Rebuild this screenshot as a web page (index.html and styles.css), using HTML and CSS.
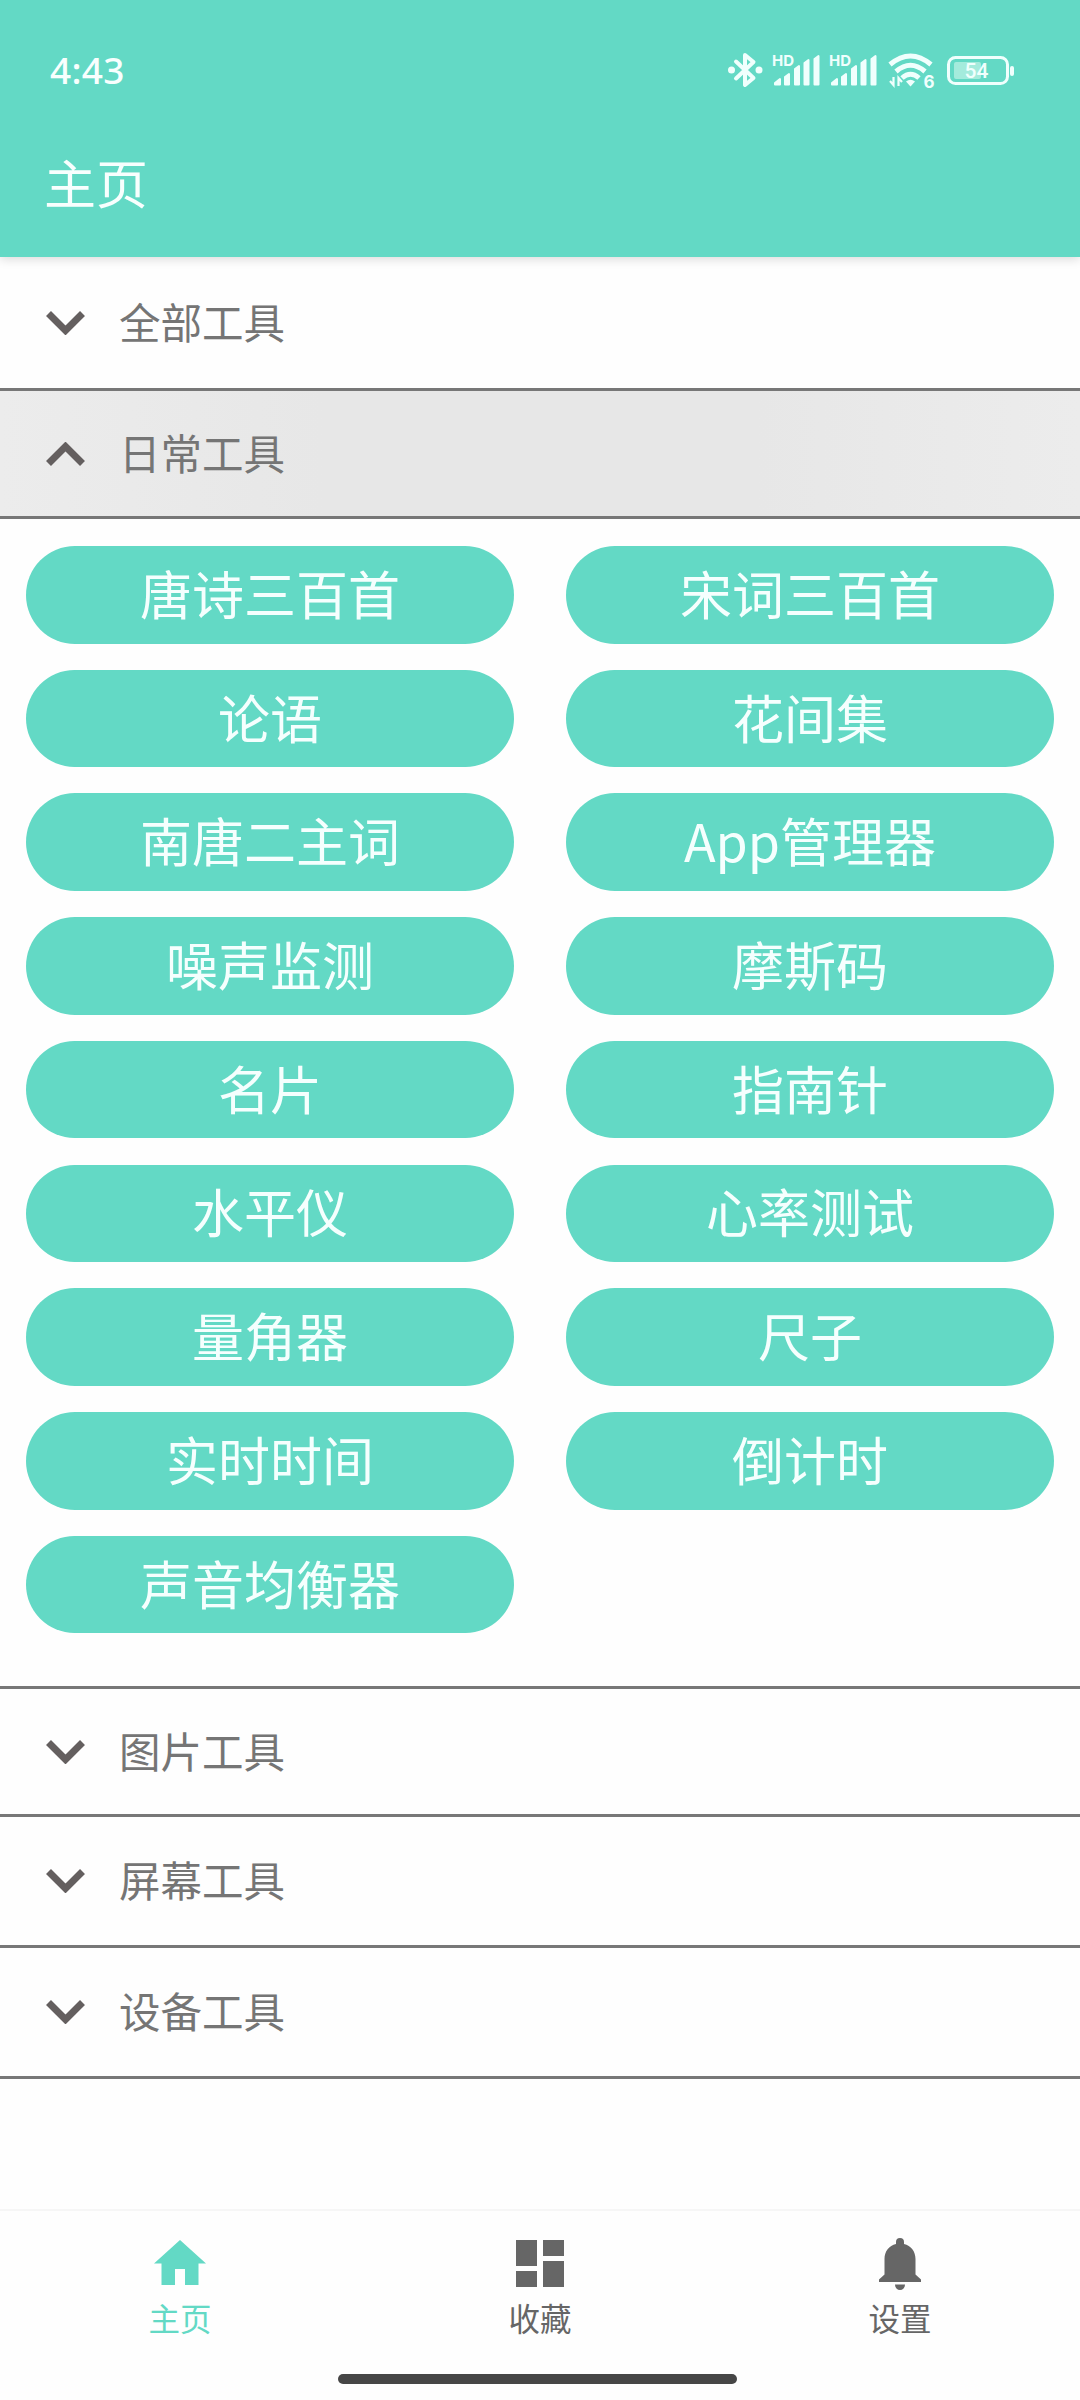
FILE: index.html
```html
<!DOCTYPE html>
<html lang="zh-CN">
<head>
    <meta charset="UTF-8">
    <meta name="viewport" content="width=device-width, initial-scale=1.0">
    <title>主页</title>
    <link rel="stylesheet" href="styles.css">
</head>
<body>
    <header class="app-header">
        <div class="status-bar">
            <span class="clock">4:43</span>
            <svg class="status-icons" width="290" height="44" viewBox="0 -2 290 44" fill="none" stroke="#f0fffd">
                <!-- Bluetooth -->
                <path d="M8 11.500L25.500 28L17 35V5L25.500 12L8 28.500" stroke-width="4" stroke-linejoin="round" stroke-linecap="round"/>
                <circle cx="3.500" cy="20" r="3.500" fill="#f0fffd" stroke="none"/>
                <circle cx="31" cy="20" r="3.500" fill="#f0fffd" stroke="none"/>
                <!-- Signal 1 -->
                <g id="signal" fill="#f0fffd" stroke="none">
                    <text class="hd" x="44" y="16" textLength="22">HD</text>
                    <path d="M47 34.500V33L52 29V34.500ZM57 27L61 24V34.500H57ZM67 19L71 16V34.500H67ZM76.500 13L80.500 10V34.500H76.500ZM86.500 9L90.500 6V34.500H86.500Z" stroke="#f0fffd" stroke-width="2" stroke-linejoin="round"/>
                </g>
                <!-- Signal 2 -->
                <use href="#signal" x="57"/>
                <!-- Wi-Fi -->
                <path d="M162 14.500Q182.500 -2.500 203 14.500M168 21.500Q182.500 9 197 21.500M174 28Q182.500 20.500 191 28" stroke-width="5"/>
                <path d="M178 31.500Q182.500 28 187 31.500L182.500 36.500Z" fill="#f0fffd" stroke="none"/>
                <path d="M165.500 27V35L162 31M170.500 36V28L174 32" stroke-width="2.200"/>
                <text class="wifi-gen" x="195.500" y="38" fill="#f0fffd" stroke="none">6</text>
                <!-- Battery -->
                <rect x="220.500" y="7.500" width="59" height="26" rx="7" stroke-width="3"/>
                <rect x="226" y="12" width="27" height="17" rx="2" fill="#a4ebdc" stroke="none"/>
                <path d="M284 18V24" stroke-width="4" stroke-linecap="round"/>
                <text class="level" x="248.500" y="27.500" text-anchor="middle" fill="#f0fffd" stroke="none">54</text>
            </svg>
        </div>
        <h1>主页</h1>
    </header>

    <main>
        <div class="group first">
            <svg class="arrow" viewBox="0 0 39 24"><path d="M2.500 2.500L19.500 19.500L36.500 2.500"/></svg>
            <span>全部工具</span>
        </div>
        <div class="group open">
            <svg class="arrow" viewBox="0 0 39 24"><path d="M2.500 21.500L19.500 4.500L36.500 21.500"/></svg>
            <span>日常工具</span>
        </div>
        <div class="tools">
            <button>唐诗三百首</button>
            <button>宋词三百首</button>
            <button>论语</button>
            <button>花间集</button>
            <button>南唐二主词</button>
            <button>App管理器</button>
            <button>噪声监测</button>
            <button>摩斯码</button>
            <button>名片</button>
            <button>指南针</button>
            <button>水平仪</button>
            <button>心率测试</button>
            <button>量角器</button>
            <button>尺子</button>
            <button>实时时间</button>
            <button>倒计时</button>
            <button>声音均衡器</button>
        </div>
        <div class="group short">
            <svg class="arrow" viewBox="0 0 39 24"><path d="M2.500 2.500L19.500 19.500L36.500 2.500"/></svg>
            <span>图片工具</span>
        </div>
        <div class="group">
            <svg class="arrow" viewBox="0 0 39 24"><path d="M2.500 2.500L19.500 19.500L36.500 2.500"/></svg>
            <span>屏幕工具</span>
        </div>
        <div class="group">
            <svg class="arrow" viewBox="0 0 39 24"><path d="M2.500 2.500L19.500 19.500L36.500 2.500"/></svg>
            <span>设备工具</span>
        </div>
    </main>

    <footer>
        <nav class="tabs">
            <a class="tab active">
                <svg width="56" height="56" viewBox="0 0 56 56"><path d="M28 2L54 25.500H46.500V47H33V31H23V47H9.500V25.500H2Z"/></svg>
                <span>主页</span>
            </a>
            <a class="tab">
                <svg width="56" height="56" viewBox="0 0 56 56"><path d="M4 2H25V28H4ZM4 33H25V49H4ZM31 2H52V18H31ZM31 23H52V49H31Z"/></svg>
                <span>收藏</span>
            </a>
            <a class="tab">
                <svg width="56" height="56" viewBox="0 0 56 56"><path d="M28 0a4 4 0 0 1 4 4v2c7 1.500 11.500 7.500 11.500 15V36.500l5.500 5V44H7v-2.500l5.500-5V21C12.500 13.500 17 7.500 24 6V4a4 4 0 0 1 4-4ZM23 46.500H33a5 5.500 0 0 1-10 0Z"/></svg>
                <span>设置</span>
            </a>
        </nav>
        <div class="home-bar"></div>
    </footer>
</body>
</html>
```
FILE: styles.css
```css
* {
    box-sizing: border-box;
    margin: 0;
    padding: 0;
}

body {
    height: 2400px;
    display: flex;
    flex-direction: column;
    background: #fefefe;
    font-family: "Noto Sans CJK SC", sans-serif;
    overflow: hidden;
}

/* Header */
.app-header {
    height: 257px;
    flex: none;
    background: #63d9c5;
    color: #f8fffe;
    box-shadow: 0 2px 10px rgba(0, 0, 0, 0.15);
}

.status-bar {
    height: 140px;
    padding: 0 62px 0 50px;
    display: flex;
    align-items: center;
    justify-content: space-between;
}

.clock {
    font: 500 37px/40px "Noto Sans", sans-serif;
    letter-spacing: 0.300px;
}

.status-icons {
    overflow: visible;
}

.hd {
    font: 700 15px/1 "Inter", sans-serif;
}

.wifi-gen {
    font: 700 17px/1 "Inter", sans-serif;
}

.level {
    font: 500 21px/1 "Roboto", sans-serif;
}

h1 {
    padding-left: 44px;
    font-size: 52px;
    font-weight: 400;
    line-height: 83px;
}

/* Collapsible groups */
.group {
    height: 131px;
    padding-left: 46px;
    display: flex;
    align-items: center;
    gap: 34px;
    border-bottom: 3px solid #777;
    color: #757575;
    font-size: 41.500px;
}

.group span {
    padding-bottom: 4px;
}

.group.first {
    height: 134px;
}

.group.open,
.group.short {
    height: 128px;
}

.group.open {
    background: linear-gradient(90deg, #ececec, #e7e7e7 30%, #e7e7e7 70%, #ececec);
}

.arrow {
    width: 39px;
    height: 24px;
    fill: none;
    stroke: #645f5f;
    stroke-width: 7;
}

/* Tool buttons */
.tools {
    display: grid;
    grid-template-columns: 1fr 1fr;
    gap: 26.200px 52px;
    padding: 27px 26px 53px;
    border-bottom: 3px solid #777;
}

.tools button {
    height: 97.550px;
    padding-bottom: 5px;
    border: none;
    border-radius: 49px;
    background: #63d9c5;
    color: #f5fffe;
    font-family: inherit;
    font-size: 52px;
}

/* Bottom navigation */
footer {
    height: 191px;
    margin-top: auto;
    border-top: 2px solid #f6f6f6;
}

.tabs {
    display: flex;
    height: 163px;
    padding-top: 27px;
}

.tab {
    flex: 1;
    display: flex;
    flex-direction: column;
    align-items: center;
    color: #666;
    fill: #666;
    font-size: 31.500px;
    line-height: 47px;
}

.tab.active {
    color: #63d9c5;
    fill: #63d9c5;
}

.home-bar {
    width: 399px;
    height: 10px;
    margin-left: 338px;
    border-radius: 5px;
    background: #464646;
}
```
